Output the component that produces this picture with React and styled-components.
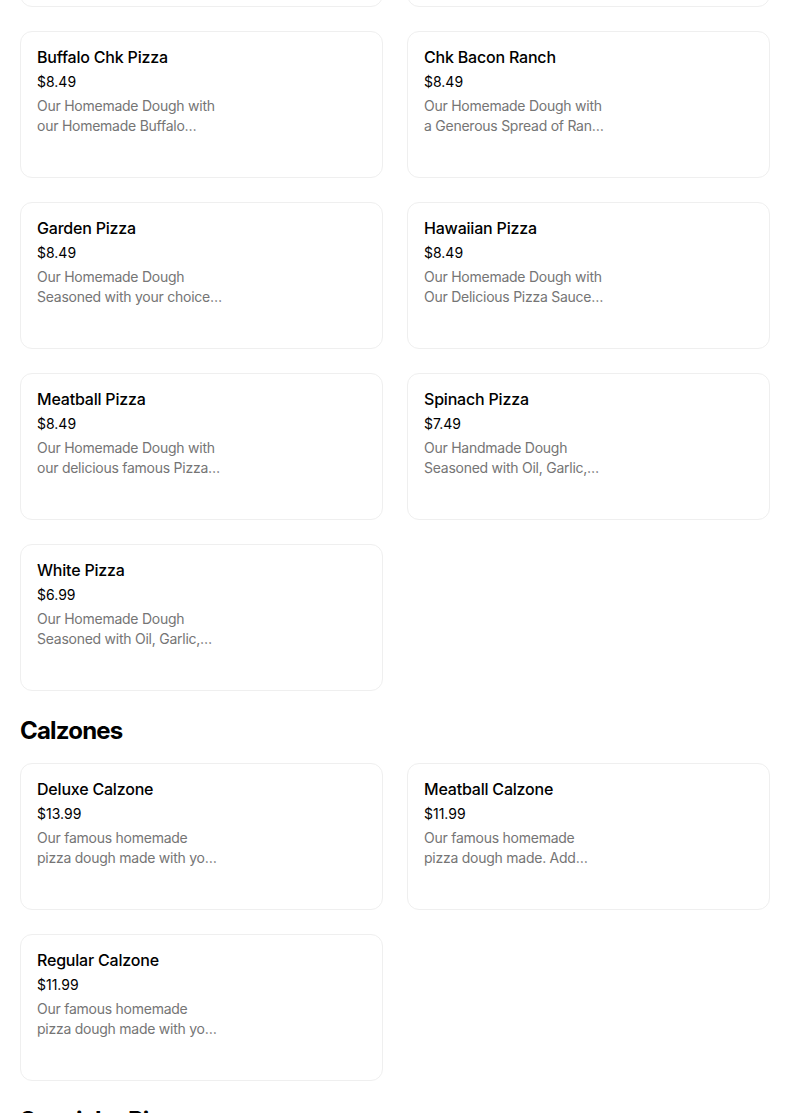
import styled, { createGlobalStyle } from 'styled-components'

const GlobalStyle = createGlobalStyle`
  html, body {
    margin: 0;
    padding: 0;
    background: #fff;
  }
  body {
    font-family: Inter, "Noto Sans", sans-serif;
    color: #000;
  }
`

const sections = [
  {
    title: null,
    items: [
      { name: 'BBQ Chicken Pizza', price: '$8.49', desc: 'Our Homemade Dough with our BBQ Sauce and Chicken' },
      { name: 'Cheese Pizza', price: '$6.99', desc: 'Our Homemade Dough with our Pizza Sauce and Cheese' },
      { name: 'Buffalo Chk Pizza', price: '$8.49', desc: 'Our Homemade Dough with our Homemade Buffalo Sauce and Chicken' },
      { name: 'Chk Bacon Ranch', price: '$8.49', desc: 'Our Homemade Dough with a Generous Spread of Ranch Dressing' },
      { name: 'Garden Pizza', price: '$8.49', desc: 'Our Homemade Dough Seasoned with your choice of fresh vegetables' },
      { name: 'Hawaiian Pizza', price: '$8.49', desc: 'Our Homemade Dough with Our Delicious Pizza Sauce and Pineapple' },
      { name: 'Meatball Pizza', price: '$8.49', desc: 'Our Homemade Dough with our delicious famous Pizza Sauce' },
      { name: 'Spinach Pizza', price: '$7.49', desc: 'Our Handmade Dough Seasoned with Oil, Garlic, and Spinach' },
      { name: 'White Pizza', price: '$6.99', desc: 'Our Homemade Dough Seasoned with Oil, Garlic, and Ricotta' },
    ],
  },
  {
    title: 'Calzones',
    items: [
      { name: 'Deluxe Calzone', price: '$13.99', desc: 'Our famous homemade pizza dough made with your choice of toppings' },
      { name: 'Meatball Calzone', price: '$11.99', desc: 'Our famous homemade pizza dough made. Add meatballs and ricotta' },
      { name: 'Regular Calzone', price: '$11.99', desc: 'Our famous homemade pizza dough made with your choice of cheese' },
    ],
  },
  { title: 'Specialty Pizzas', items: [] },
]

const MenuItem = ({ name, price, desc }) => (
  <Card>
    <ItemName>{name}</ItemName>
    <Price>{price}</Price>
    <Description>{desc}</Description>
  </Card>
)

const App = () => (
  <Page>
    <GlobalStyle />
    {sections.map((section, i) => (
      <Section key={i}>
        {section.title && <SectionTitle>{section.title}</SectionTitle>}
        {section.items.length > 0 && (
          <Grid>
            {section.items.map(item => (
              <MenuItem key={item.name} {...item} />
            ))}
          </Grid>
        )}
      </Section>
    ))}
  </Page>
)

export default App

const Page = styled.main`
  width: 750px;
  padding: 0 20px;
  /* page is scrolled: the row above is mostly out of view */
  margin-top: -140px;
  height: 1253px;
  overflow: hidden;
`

const Section = styled.section`
  display: flex;
  flex-direction: column;
`

const SectionTitle = styled.h2`
  margin: 24px 0 16px;
  font-size: 24px;
  line-height: 32px;
  font-weight: 700;
  letter-spacing: -0.8px;
`

const Grid = styled.div`
  display: grid;
  grid-template-columns: 1fr 1fr;
  gap: 24px;
`

const Card = styled.div`
  height: 147px;
  box-sizing: border-box;
  border: 1px solid #efefef;
  border-radius: 12px;
  padding: 14px 16px;
  display: flex;
  flex-direction: column;
`

const ItemName = styled.div`
  font-size: 16px;
  line-height: 22px;
  font-weight: 500;
  letter-spacing: -0.2px;
`

const Price = styled.div`
  margin-top: 4px;
  font-size: 14px;
  line-height: 20px;
`

const Description = styled.div`
  margin-top: 4px;
  max-width: 187px;
  font-size: 14px;
  line-height: 20px;
  letter-spacing: -0.25px;
  color: #757575;
  display: -webkit-box;
  -webkit-line-clamp: 2;
  -webkit-box-orient: vertical;
  overflow: hidden;
`
